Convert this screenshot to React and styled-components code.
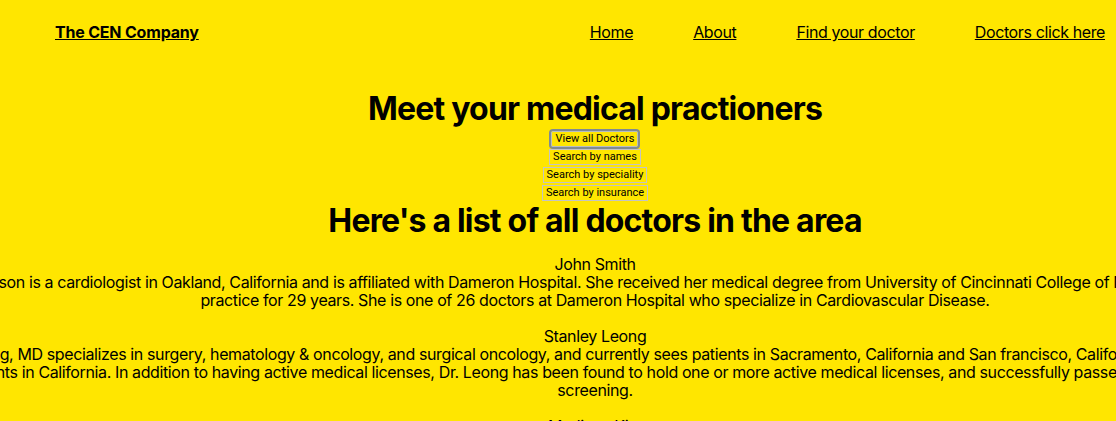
import React from "react";
import styled, { createGlobalStyle } from "styled-components";

const Global = createGlobalStyle`
  html, body {
    margin: 0;
    padding: 0;
    background: #ffe600;
    overflow: hidden;
  }
  body {
    font-family: Inter, "Noto Sans", sans-serif;
    color: #000;
  }
`;

const Page = styled.div`
  width: 1116px;
  min-height: 421px;
  background: #ffe600;
  overflow: hidden;
`;

const Nav = styled.nav`
  height: 64px;
  display: flex;
  align-items: center;
  justify-content: space-between;
  padding: 0 11px 0 55px;
`;

const Brand = styled.a`
  font-size: 16px;
  font-weight: 700;
  letter-spacing: -0.012em;
  color: #000;
  text-decoration: underline;
`;

const Links = styled.div`
  display: flex;
  gap: 60px;
`;

const NavLink = styled.a`
  font-size: 16px;
  letter-spacing: -0.024em;
  color: #000;
  text-decoration: underline;
`;

const Main = styled.main`
  width: 1190px;
  display: flex;
  flex-direction: column;
  align-items: center;
`;

const Title = styled.h1`
  font-size: 32px;
  font-weight: 700;
  letter-spacing: -0.025em;
  line-height: 40px;
  margin: ${(p) => p.$top || 0}px 0 ${(p) => p.$bottom || 0}px;
  white-space: nowrap;
`;

const Buttons = styled.div`
  display: flex;
  flex-direction: column;
  align-items: center;
  gap: 2px;
  margin-top: 2px;
`;

const Btn = styled.button`
  font-family: Roboto, "Noto Sans", sans-serif;
  font-size: 11px;
  line-height: 14px;
  height: 16px;
  padding: 0 3px;
  background: transparent;
  color: #000;
  border: 1px solid ${(p) => (p.$focused ? "#b7bdc1" : "#c4c4c4")};
  border-radius: ${(p) => (p.$focused ? "2px" : "0")};
  box-shadow: ${(p) => (p.$focused ? "0 0 0 2px #808a92" : "none")};
  cursor: pointer;
`;

const Doctor = styled.div`
  width: 1430px;
  text-align: center;
  font-size: 16px;
  letter-spacing: -0.024em;
  line-height: 18px;
  margin-bottom: 18px;
  flex-shrink: 0;
`;

const Name = styled.div``;

const Bio = styled.p`
  margin: 0;
`;

const doctors = [
  {
    name: "John Smith",
    bio: [
      "Dr. Sarah Johnson is a cardiologist in Oakland, California and is affiliated with Dameron Hospital. She received her medical degree from University of Cincinnati College of Medicine and has been in practice for 29 years. She is one of 26 doctors at Dameron Hospital who specialize in Cardiovascular Disease.",
    ],
  },
  {
    name: "Stanley Leong",
    bio: [
      "Dr. Stanley Leong, MD specializes in surgery, hematology & oncology, and surgical oncology, and currently sees patients in Sacramento, California and San francisco, California. He is licensed to treat patients in California. In addition to having active medical licenses, Dr. Leong has been found to hold one or more active medical licenses, and successfully passed a background",
      "screening.",
    ],
  },
  {
    name: "Madison Kim",
    bio: [
      "Dr. Madison Kim is a family medicine doctor in San Jose, California and is affiliated with Good Samaritan Hospital.",
    ],
  },
];

export default function App() {
  return (
    <>
      <Global />
      <Page>
        <Nav>
          <Brand href="#">The CEN Company</Brand>
          <Links>
            <NavLink href="#">Home</NavLink>
            <NavLink href="#">About</NavLink>
            <NavLink href="#">Find your doctor</NavLink>
            <NavLink href="#">Doctors click here</NavLink>
          </Links>
        </Nav>
        <Main>
          <Title $top={25}>Meet your medical practioners</Title>
          <Buttons>
            <Btn $focused>View all Doctors</Btn>
            <Btn>Search by names</Btn>
            <Btn>Search by speciality</Btn>
            <Btn>Search by insurance</Btn>
          </Buttons>
          <Title $bottom={14}>Here's a list of all doctors in the area</Title>
          {doctors.map((d) => (
            <Doctor key={d.name}>
              <Name>{d.name}</Name>
              <Bio>
                {d.bio.map((part, i) => (
                  <React.Fragment key={i}>
                    {i > 0 && <br />}
                    {part}
                  </React.Fragment>
                ))}
              </Bio>
            </Doctor>
          ))}
        </Main>
      </Page>
    </>
  );
}
